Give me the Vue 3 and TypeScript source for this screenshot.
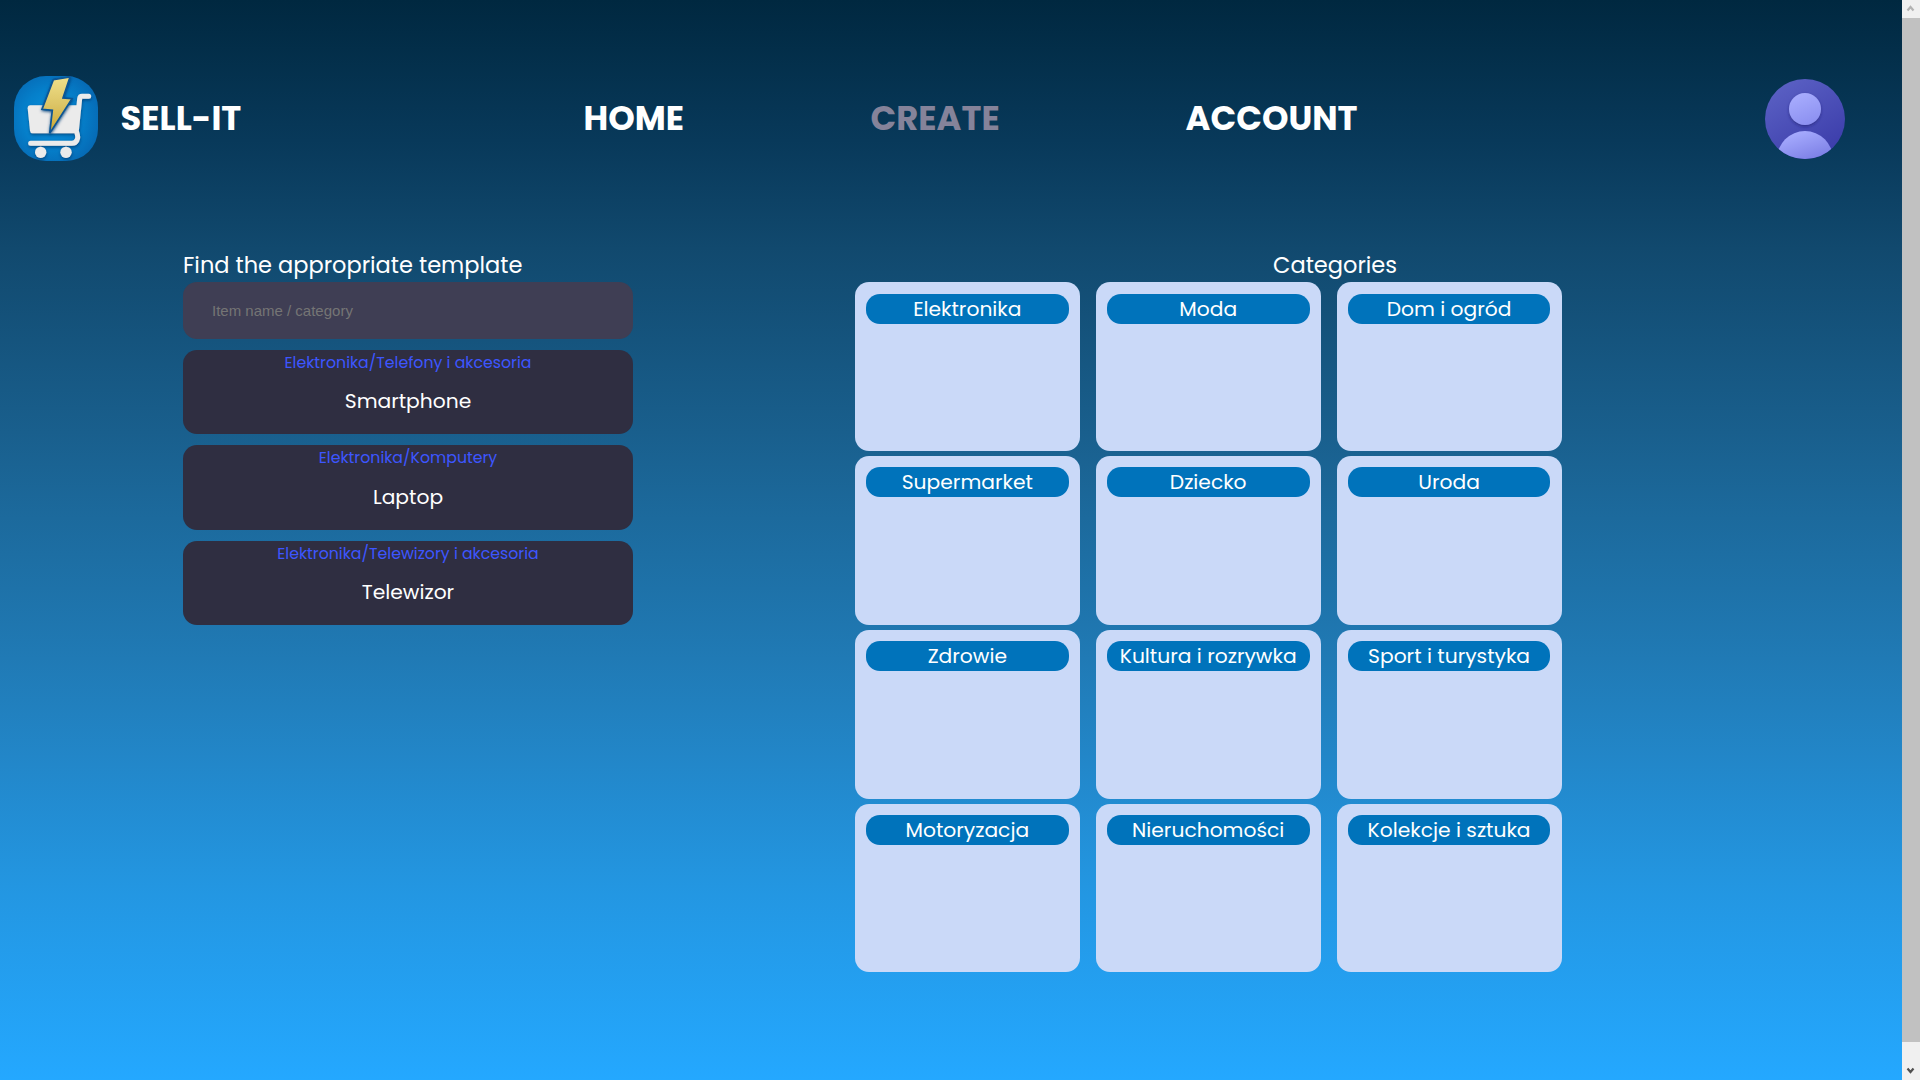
<script setup lang="ts">
interface Template {
  path: string
  name: string
}

const templates: Template[] = [
  { path: 'Elektronika/Telefony i akcesoria', name: 'Smartphone' },
  { path: 'Elektronika/Komputery', name: 'Laptop' },
  { path: 'Elektronika/Telewizory i akcesoria', name: 'Telewizor' },
]

const categories: string[] = [
  'Elektronika',
  'Moda',
  'Dom i ogród',
  'Supermarket',
  'Dziecko',
  'Uroda',
  'Zdrowie',
  'Kultura i rozrywka',
  'Sport i turystyka',
  'Motoryzacja',
  'Nieruchomości',
  'Kolekcje i sztuka',
]
</script>

<template>
  <div class="window">
    <div class="page">
      <header class="header">
        <svg class="logo" viewBox="42 48 252 255" preserveAspectRatio="none">
          <defs>
            <radialGradient id="logoBg" cx="0.45" cy="0.5" r="0.62">
              <stop offset="0" stop-color="#0a93dc" />
              <stop offset="0.55" stop-color="#0580cb" />
              <stop offset="1" stop-color="#0667b2" />
            </radialGradient>
            <linearGradient id="boltFill" x1="0" y1="0" x2="0" y2="1">
              <stop offset="0" stop-color="#efe08a" />
              <stop offset="0.5" stop-color="#dcc465" />
              <stop offset="1" stop-color="#cda62f" />
            </linearGradient>
            <filter id="cartShadow" x="-20%" y="-20%" width="140%" height="140%">
              <feDropShadow dx="1" dy="5" stdDeviation="4" flood-color="#013a70" flood-opacity="0.75" />
            </filter>
            <filter id="boltShadow" x="-30%" y="-20%" width="160%" height="140%">
              <feDropShadow dx="1" dy="3" stdDeviation="4" flood-color="#023c78" flood-opacity="0.9" />
            </filter>
          </defs>
          <rect x="42" y="48" width="252" height="255" rx="96" fill="url(#logoBg)" />
          <g filter="url(#cartShadow)">
            <path d="M91 136H234L230 220H98Q91 220 90 212L83 145Q83 136 91 136Z" fill="#ebebeb" />
            <path d="M266 109H246Q240 109 239 116L229 213Q236 232 231 240Q227 250 216 250H92" fill="none" stroke="#ebebeb" stroke-width="15" stroke-linecap="round" stroke-linejoin="round" />
            <circle cx="122" cy="277" r="17" fill="#ebebeb" />
            <circle cx="198" cy="277" r="17" fill="#ebebeb" />
          </g>
          <path d="M160 59L210 51L189 114L216 116L149 220L157 151L126 148Z" fill="url(#boltFill)" stroke="#0b5595" stroke-width="5" filter="url(#boltShadow)" />
        </svg>
        <span class="cell brand">SELL-IT</span>
        <nav class="nav">
          <a class="cell home">HOME</a>
          <a class="cell create">CREATE</a>
          <a class="cell account">ACCOUNT</a>
        </nav>
        <svg class="avatar" viewBox="0 0 80 80">
          <defs>
            <linearGradient id="avatarBg" x1="0.2" y1="0" x2="0.8" y2="1">
              <stop offset="0" stop-color="#5b61c4" />
              <stop offset="1" stop-color="#3a3ba9" />
            </linearGradient>
            <linearGradient id="avatarFg" x1="0.3" y1="0" x2="0.7" y2="1">
              <stop offset="0" stop-color="#a8adfe" />
              <stop offset="1" stop-color="#8b8ff0" />
            </linearGradient>
            <linearGradient id="avatarBody" gradientUnits="userSpaceOnUse" x1="34" y1="52" x2="44" y2="82">
              <stop offset="0" stop-color="#a6abfe" />
              <stop offset="1" stop-color="#7d80e6" />
            </linearGradient>
            <clipPath id="avatarClip"><circle cx="40" cy="40" r="40" /></clipPath>
            <filter id="avatarShadow" x="-30%" y="-30%" width="160%" height="160%">
              <feDropShadow dx="0" dy="1.5" stdDeviation="1.5" flood-color="#1c1c70" flood-opacity="0.6" />
            </filter>
          </defs>
          <g clip-path="url(#avatarClip)">
            <rect width="80" height="80" fill="url(#avatarBg)" />
            <circle cx="40" cy="80" r="28" fill="url(#avatarBody)" />
            <circle cx="40" cy="30" r="16" fill="url(#avatarFg)" filter="url(#avatarShadow)" />
          </g>
        </svg>
      </header>

      <main class="content">
        <section class="finder">
          <h2 class="title">Find the appropriate template</h2>
          <input class="search" type="text" placeholder="Item name / category" />
          <article v-for="item in templates" :key="item.name" class="template">
            <div class="path">{{ item.path }}</div>
            <div class="name">{{ item.name }}</div>
          </article>
        </section>

        <section class="catalog">
          <h2 class="title centered">Categories</h2>
          <div class="grid">
            <article v-for="category in categories" :key="category" class="category">
              <div class="pill">{{ category }}</div>
            </article>
          </div>
        </section>
      </main>
    </div>

    <aside class="scrollbar">
      <svg class="arrow" viewBox="0 0 18 18"><path d="M5.5 10.5L8.5 7L11.5 10.5" fill="none" stroke="#b3b3b3" stroke-width="2.2" /></svg>
      <div class="thumb"></div>
      <svg class="arrow down" viewBox="0 0 18 18"><path d="M5.5 6.5L8.5 10L11.5 6.5" fill="none" stroke="#505050" stroke-width="2.2" /></svg>
    </aside>
  </div>
</template>

<style>
body {
  margin: 0;
  overflow: hidden;
}
</style>

<style scoped>
.window {
  display: flex;
  width: 1920px;
  height: 1080px;
  overflow: hidden;
  font-family: Poppins, Inter, 'Open Sans', sans-serif;
  color: #fff;
}

.window * {
  box-sizing: border-box;
}

.page {
  flex: 1;
  background: linear-gradient(
    180deg,
    #002840 0%,
    #08395a 13%,
    #11496e 23%,
    #195f8d 40%,
    #1c6a9d 48%,
    #207ab5 61%,
    #2286c8 70%,
    #2396e1 82%,
    #24a8ff 100%
  );
}

.header {
  display: flex;
  align-items: center;
  height: 237px;
  padding: 0 57px 0 14px;
}

.logo {
  width: 84px;
  height: 85px;
}

.cell {
  font-size: 33.75px;
  font-weight: 700;
  line-height: 40px;
  white-space: nowrap;
}

.brand {
  width: 463px;
  margin-left: 22.6px;
}

.nav {
  display: flex;
}

.home {
  width: 287px;
}

.create {
  width: 315px;
  color: #85839a;
}

.avatar {
  width: 80px;
  height: 80px;
  margin-left: auto;
}

.content {
  display: flex;
  align-items: flex-start;
  padding: 11px 0 0 183px;
}

.finder {
  display: flex;
  flex-direction: column;
  width: 450px;
}

.title {
  margin: 0;
  font-size: 22.5px;
  font-weight: 400;
  line-height: 34px;
}

.centered {
  padding-left: 418.3px;
}

.search {
  height: 56.8px;
  padding: 0 29px;
  border: 0;
  border-radius: 14px;
  outline: 0;
  background: #3f3e54;
  color: #fff;
  font-family: 'Liberation Sans', Arial, sans-serif;
  font-size: 15px;
}

.search::placeholder {
  color: #757575;
}

.template {
  height: 84.2px;
  margin-top: 11.2px;
  border-radius: 14px;
  background: #2f2e41;
  text-align: center;
}

.path {
  color: #3d56ff;
  font-size: 15.75px;
  line-height: 25px;
}

.name {
  margin-top: 11.2px;
  font-size: 20.25px;
  line-height: 30px;
}

.catalog {
  margin-left: 221.8px;
}

.grid {
  display: grid;
  grid-template-columns: repeat(3, 225px);
  grid-auto-rows: 168.7px;
  gap: 5.1px 15.9px;
  padding-top: 0.4px;
}

.category {
  padding: 11.2px;
  border-radius: 14px;
  background: #cad9f8;
}

.pill {
  height: 30px;
  border-radius: 14px;
  background: #0073bb;
  font-size: 20.25px;
  line-height: 30px;
  text-align: center;
}

.scrollbar {
  display: flex;
  flex-direction: column;
  width: 18px;
  background: #f0f0f0;
}

.arrow {
  width: 18px;
  height: 18px;
}

.thumb {
  height: 1024px;
  background: #c1c1c1;
}

.down {
  margin-top: auto;
}
</style>
